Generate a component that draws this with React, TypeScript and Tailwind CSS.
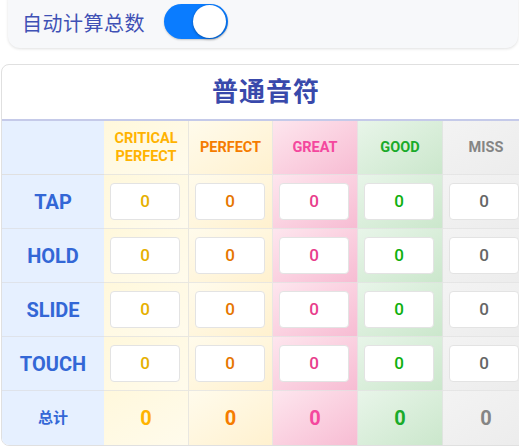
import React from "react";

const cols = [
  { key: "cp", label: ["CRITICAL", "PERFECT"], head: "text-[#ffb300]", num: "text-[#e6b000]", tot: "text-[#ffb300]", bg: "bg-gradient-to-br from-[#fff8dc] to-[#fffbec]" },
  { key: "p", label: ["PERFECT"], head: "text-[#f57c00]", num: "text-[#e67600]", tot: "text-[#f57c00]", bg: "bg-gradient-to-br from-[#fffbec] to-[#fff1cf]" },
  { key: "g", label: ["GREAT"], head: "text-[#f4479e]", num: "text-[#e83e8c]", tot: "text-[#f4479e]", bg: "bg-gradient-to-br from-[#fde6ee] to-[#f7bcd3]" },
  { key: "go", label: ["GOOD"], head: "text-[#1aab2a]", num: "text-[#0fb00f]", tot: "text-[#1aab2a]", bg: "bg-gradient-to-br from-[#e8f5e9] to-[#cbe7cc]" },
  { key: "m", label: ["MISS"], head: "text-[#858585]", num: "text-[#666666]", tot: "text-[#858585]", bg: "bg-gradient-to-br from-[#f3f3f3] to-[#ececec]" },
];

const rows = ["TAP", "HOLD", "SLIDE", "TOUCH"];

export default function App() {
  return (
    <div className="w-[519px] h-[446px] overflow-hidden bg-white" style={{ fontFamily: 'Roboto, "Noto Sans CJK SC", sans-serif' }}>
      <div className="ml-[8px] -mt-[12px] w-[510px] h-[60px] rounded-[12px] bg-[#f7f8fa] shadow-[0_1px_3px_rgba(0,0,0,0.12)] flex items-end pb-[9px] pl-[14px] gap-[19px]">
        <span className="text-[20px] leading-[28px] text-[#3f51b5] tracking-[0.5px] pb-[1px]">自动计算总数</span>
        <div className="relative w-[64px] h-[35px] rounded-full bg-[#0a7cff] shadow-[0_1px_2px_rgba(0,0,0,0.2)]">
          <div className="absolute right-[2px] top-[1px] w-[33px] h-[33px] rounded-full bg-white shadow-[0_1px_3px_rgba(0,0,0,0.35)]" />
        </div>
      </div>

      <div className="ml-[1px] mt-[16px] w-[530px] rounded-[8px] border border-[#e0e0e0] overflow-hidden bg-white">
        <div className="h-[56px] flex items-center justify-center border-b-2 border-[#c5cae9]">
          <span className="text-[26px] font-bold text-[#3949ab] tracking-[1px]">普通音符</span>
        </div>
        <div className="grid grid-cols-[102px_85px_84px_85px_85px_87px]">
          <div className="h-[54px] bg-[#e6f0ff] border-b border-[#e0e0e0]" />
          {cols.map((c) => (
            <div key={c.key} className={`h-[54px] ${c.bg} border-b border-r border-[#e0e0e0]/70 flex flex-col items-center justify-center text-[14.5px] font-bold leading-[18px] ${c.head}`}>
              {c.label.map((l) => (
                <span key={l}>{l}</span>
              ))}
            </div>
          ))}
          {rows.map((r) => (
            <React.Fragment key={r}>
              <div className="h-[54px] bg-[#e6f0ff] border-b border-[#dfe3ea] flex items-center justify-center text-[20px] font-bold text-[#3367d6]">
                {r}
              </div>
              {cols.map((c) => (
                <div key={c.key} className={`h-[54px] ${c.bg} border-b border-r border-[#e0e0e0]/70 flex items-center pl-[6px]`}>
                  <div className={`w-[70px] h-[37px] bg-white rounded-[4px] border border-[#e3e3e3] flex items-center justify-center text-[17px] font-medium ${c.num}`}>
                    0
                  </div>
                </div>
              ))}
            </React.Fragment>
          ))}
          <div className="h-[54px] bg-[#e6f0ff] flex items-center justify-center text-[15px] font-bold text-[#3367d6]">总计</div>
          {cols.map((c) => (
            <div key={c.key} className={`h-[54px] ${c.bg} border-r border-[#e0e0e0]/70 flex items-center justify-center text-[20px] font-bold ${c.tot}`}>
              0
            </div>
          ))}
        </div>
      </div>
    </div>
  );
}
